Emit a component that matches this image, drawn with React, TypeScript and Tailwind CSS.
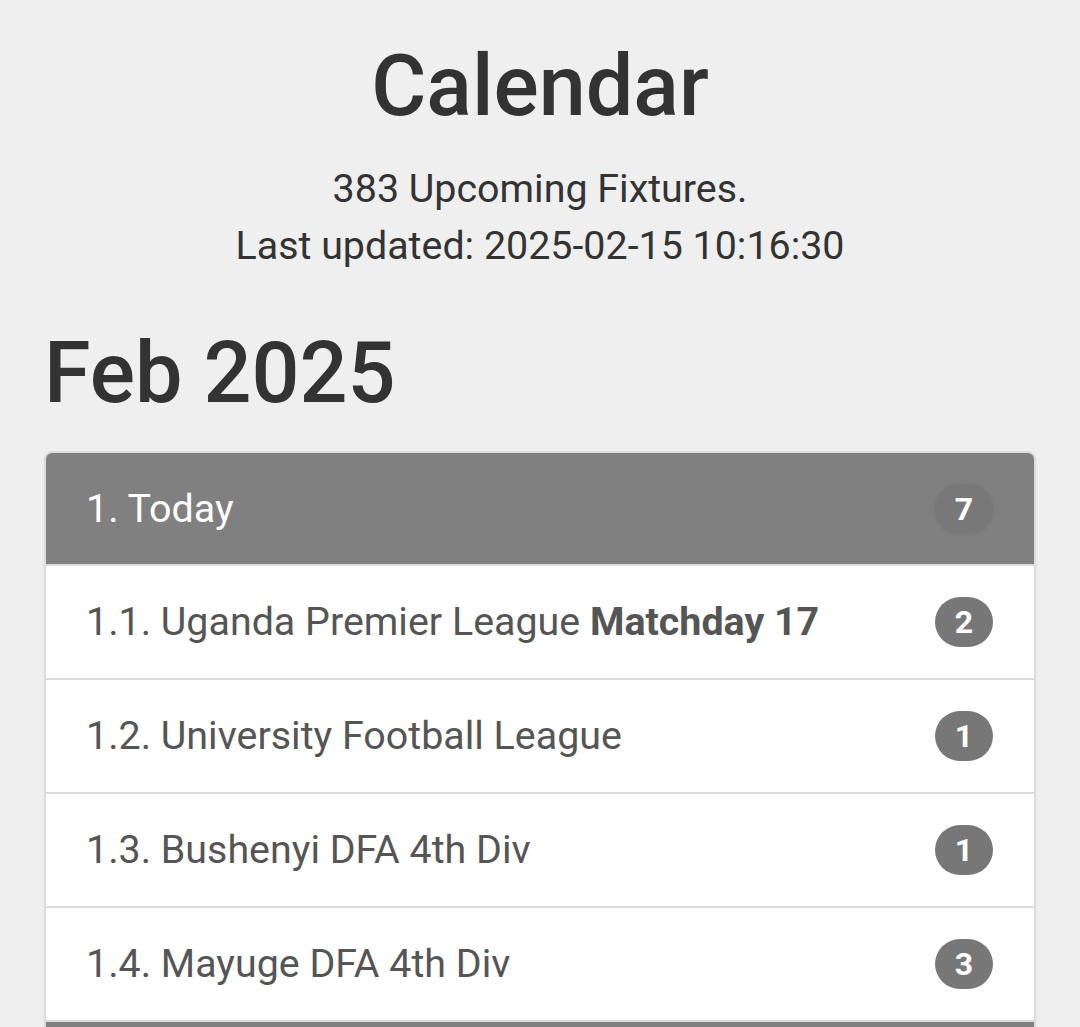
import React from "react";

const rows: { label: React.ReactNode; count: number }[] = [
  { label: <>1.1. Uganda Premier League <b className="font-bold">Matchday 17</b></>, count: 2 },
  { label: "1.2. University Football League", count: 1 },
  { label: "1.3. Bushenyi DFA 4th Div", count: 1 },
  { label: "1.4. Mayuge DFA 4th Div", count: 3 },
];

export default function App() {
  return (
    <div className="min-h-[1027px] h-[1027px] overflow-hidden bg-[#efefef] px-[44px] text-[#333]" style={{ fontFamily: "Roboto, 'Noto Sans', sans-serif" }}>
      <h1 className="pt-[36px] text-center text-[84.5px] leading-[102px] font-medium">Calendar</h1>
      <div className="mt-[22px] text-center text-[39.4px] leading-[57px]">
        <p>383 Upcoming Fixtures.</p>
        <p>Last updated: 2025-02-15 10:16:30</p>
      </div>
      <h2 className="mt-[49px] text-[84.5px] leading-[102px] font-medium">Feb 2025</h2>
      <div className="mt-[26px] rounded-t-[8px] border-[2px] border-[#dcdcdc] shadow-[0_1px_2px_rgba(0,0,0,0.08)]">
        <div className="flex h-[111px] items-center justify-between rounded-t-[6px] bg-[#808080] pl-[40px] pr-[41px] text-white">
          <span className="text-[39.4px]">1. Today</span>
          <span className="flex h-[50px] w-[58px] items-center justify-center rounded-full bg-[#787878] text-[32px] font-bold shadow-[0_0_4px_rgba(0,0,0,0.08)]">7</span>
        </div>
        {rows.map((r, i) => (
          <div key={i} className="flex h-[114px] items-center justify-between border-t-[2px] border-[#dcdcdc] bg-white pl-[40px] pr-[41px]">
            <span className="text-[39.4px] text-[#555]">{r.label}</span>
            <span className="flex h-[50px] w-[58px] items-center justify-center rounded-full bg-[#777] text-[32px] font-bold text-white">{r.count}</span>
          </div>
        ))}
        <div className="h-[20px] bg-[#808080] border-t-[2px] border-[#dcdcdc]" />
      </div>
    </div>
  );
}
